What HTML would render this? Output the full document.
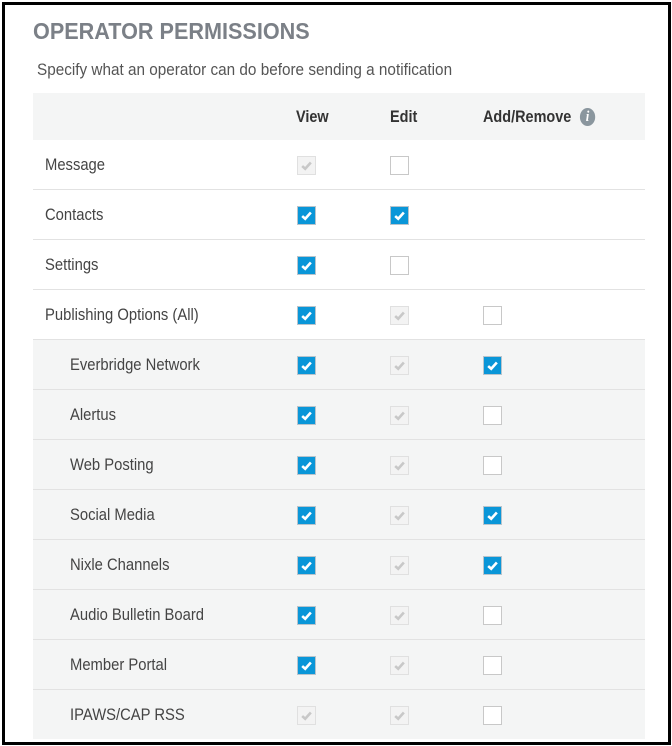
<!DOCTYPE html>
<html><head><style>
html,body{margin:0;padding:0;background:#fff;}
body{width:672px;height:746px;position:relative;overflow:hidden;font-family:"Liberation Sans",sans-serif;}
.frame{position:absolute;left:2px;top:2px;width:663px;height:737px;border:3px solid #000;}
.n{display:inline-block;transform-origin:0 50%;white-space:nowrap;}
.title{position:absolute;left:33px;top:18px;font-size:23px;color:#7b8087;font-weight:bold;transform:scaleX(0.94);}
.sub{position:absolute;left:37px;top:60px;font-size:17px;color:#555;transform:scaleX(0.9);}
.tbl{position:absolute;left:33px;top:93px;width:612px;}
.hdr{height:47px;background:#f4f5f5;position:relative;font-weight:bold;font-size:17px;color:#333;}
.hdr span{position:absolute;top:14px;transform:scaleX(0.85);}
.row{height:49px;border-top:1px solid #e2e2e2;position:relative;font-size:17px;color:#444;}
.row:first-of-type{border-top:none;}
.row.s{background:#f4f5f5;}
.row .l{position:absolute;left:12px;top:15px;transform:scaleX(0.87);}
.row.s .l{left:37px;}
.cb{position:absolute;top:16px;width:17px;height:17px;border:1px solid #c8c8c8;background:#fff;}
.cb.c{background:#0a96d8;border-color:#b8c4cc;}
.cb.d{background:#f3f3f3;border-color:#e0e0e0;}
.cb svg{position:absolute;left:2px;top:2px;}
.v{left:264px}.e{left:357px}.a{left:450px}
.info{display:inline-block;width:18px;height:18px;border-radius:50%;background:#8a969e;color:#fff;font-family:"Liberation Serif",serif;font-size:15px;font-weight:bold;text-align:center;line-height:18px;margin-left:10px;vertical-align:1px;}
</style></head><body>
<div class="frame"></div>
<div class="title n">OPERATOR PERMISSIONS</div>
<div class="sub n">Specify what an operator can do before sending a notification</div>
<div class="tbl">
<div class="hdr"><span class="n" style="left:263px">View</span><span class="n" style="left:357px">Edit</span><span class="n" style="left:450px">Add/Remove<i class="info">i</i></span></div>
<div id="rows"></div>
</div>
<script>
var ck='<svg width="13" height="13" viewBox="0 0 12 12"><path d="M2 6.5 L4.8 9 L10 3.2" fill="none" stroke="COL" stroke-width="2.4"/></svg>';
function box(cls,t){if(t=='c')return '<div class="cb c '+cls+'">'+ck.replace('COL','#fff')+'</div>';if(t=='d')return '<div class="cb d '+cls+'">'+ck.replace('COL','#c8c8c8')+'</div>';if(t=='u')return '<div class="cb '+cls+'"></div>';return '';}
var R=[['Message',0,'d','u',''],['Contacts',0,'c','c',''],['Settings',0,'c','u',''],['Publishing Options (All)',0,'c','d','u'],['Everbridge Network',1,'c','d','c'],['Alertus',1,'c','d','u'],['Web Posting',1,'c','d','u'],['Social Media',1,'c','d','c'],['Nixle Channels',1,'c','d','c'],['Audio Bulletin Board',1,'c','d','u'],['Member Portal',1,'c','d','u'],['IPAWS/CAP RSS',1,'d','d','u']];
var h='';R.forEach(function(r){h+='<div class="row'+(r[1]?' s':'')+'"><span class="l n">'+r[0]+'</span>'+box('v',r[2])+box('e',r[3])+box('a',r[4])+'</div>';});
document.getElementById('rows').innerHTML=h;
</script>
</body></html>
